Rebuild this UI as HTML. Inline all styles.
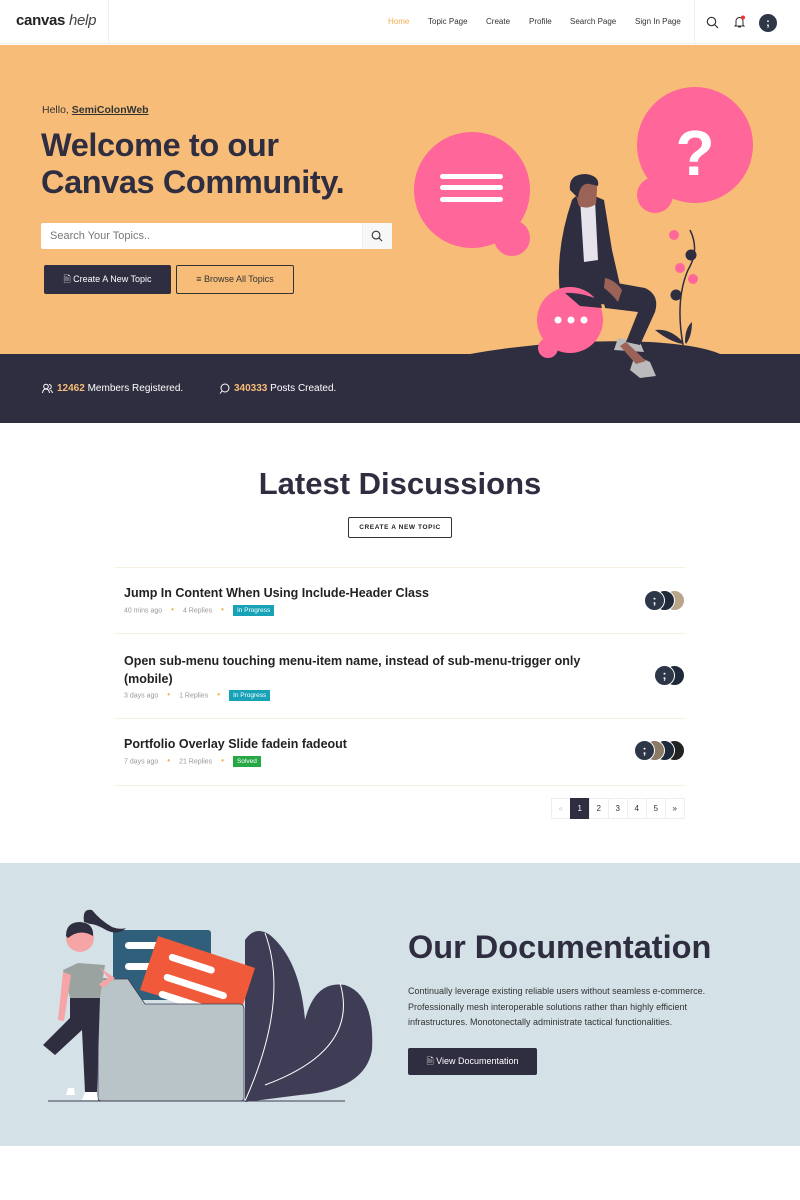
<!DOCTYPE html>
<html><head><meta charset="utf-8"><style>
*{margin:0;padding:0;box-sizing:border-box}
body{width:800px;height:1200px;background:#fff;font-family:"Liberation Sans",sans-serif;color:#2f2d40;position:relative;overflow:hidden}
.a{position:absolute}
.nav a{position:absolute;top:17px;font-size:8px;color:#333;text-decoration:none}
.t{font-weight:bold;font-size:12.5px;color:#222;left:124px}
.m{font-size:7px;color:#999;left:124px}
.m b{color:#f0ad4e;margin:0 9px;font-size:8px}
.tag{display:inline-block;color:#fff;font-size:6.5px;padding:2px 4px;vertical-align:middle}
.av{position:absolute;width:21px;height:21px;border-radius:50%;border:1.5px solid #fff}
.pg{position:absolute;top:798px;height:21px;width:19.5px;border:1px solid #eee;font-size:8px;text-align:center;line-height:19px;color:#333;background:#fff}
.sep{position:absolute;left:115px;width:570px;height:1px;background:#f5efe4}
</style></head><body>
<!-- header -->
<div class="a" style="left:0;top:0;width:800px;height:44px;border-bottom:1px solid #eee;background:#fff"></div>
<div class="a" style="left:16px;top:12px;font-size:15px;color:#222;letter-spacing:-0.3px"><span style="font-weight:bold">canvas</span><span style="font-style:italic;color:#444"> help</span></div>
<div class="a" style="left:108px;top:0;width:1px;height:44px;background:#eee"></div>
<div class="a" style="left:694px;top:0;width:1px;height:44px;background:#eee"></div>
<div class="nav">
<a style="left:388px;color:#f0ad4e">Home</a>
<a style="left:428px">Topic Page</a>
<a style="left:486px">Create</a>
<a style="left:529px">Profile</a>
<a style="left:570px">Search Page</a>
<a style="left:635px">Sign In Page</a>
</div>
<svg class="a" style="left:706px;top:16px" width="13" height="13" viewBox="0 0 13 13"><circle cx="5.5" cy="5.5" r="4.2" fill="none" stroke="#333" stroke-width="1.2"/><line x1="8.5" y1="8.5" x2="12" y2="12" stroke="#333" stroke-width="1.2"/></svg>
<svg class="a" style="left:733px;top:15px" width="13" height="14" viewBox="0 0 13 14"><path d="M3 10V6a3.5 3.5 0 017 0v4l1 1H2z" fill="none" stroke="#333" stroke-width="1"/><path d="M5 12h3" stroke="#333"/><circle cx="10" cy="2.5" r="2" fill="#e33"/></svg>
<div class="a" style="left:759px;top:14px;width:18px;height:18px;border-radius:50%;background:#2d3748;color:#fff;font-size:11px;font-weight:bold;text-align:center;line-height:18px">;</div>

<!-- hero -->
<div class="a" style="left:0;top:45px;width:800px;height:310px;background:#f7bd78"></div>
<div class="a" style="left:0;top:354px;width:800px;height:69px;background:#2f2d40"></div>
<div class="a" style="left:42px;top:104px;font-size:10.5px;color:#333">Hello, <b style="text-decoration:underline">SemiColonWeb</b></div>
<div class="a" style="left:41px;top:127px;font-size:32.5px;font-weight:bold;line-height:37px;color:#2f2d40;letter-spacing:-0.4px">Welcome to our<br>Canvas Community.</div>
<div class="a" style="left:41px;top:223px;width:351px;height:26px;background:#fff;border-radius:2px"></div>
<div class="a" style="left:362px;top:223px;width:30px;height:26px;background:#f7f7f7;border-left:1px solid #eee"></div>
<div class="a" style="left:50px;top:230px;font-size:11px;color:#777">Search Your Topics..</div>
<svg class="a" style="left:371px;top:230px" width="12" height="12" viewBox="0 0 13 13"><circle cx="5.5" cy="5.5" r="4.2" fill="none" stroke="#333" stroke-width="1.2"/><line x1="8.5" y1="8.5" x2="12" y2="12" stroke="#333" stroke-width="1.2"/></svg>
<div class="a" style="left:44px;top:265px;width:127px;height:29px;background:#2f2d40;border-radius:2px;color:#fff;font-size:9px;text-align:center;line-height:29px">🗎 Create A New Topic</div>
<div class="a" style="left:176px;top:265px;width:118px;height:29px;border:1px solid #333;border-radius:2px;color:#333;font-size:9px;text-align:center;line-height:27px">≡ Browse All Topics</div>

<svg class="a" style="left:400px;top:80px" width="400" height="310" viewBox="0 0 400 310">
<circle cx="72" cy="110" r="58" fill="#ff6699"/><circle cx="112" cy="158" r="18" fill="#ff6699"/>
<rect x="40" y="94" width="63" height="5" rx="2.5" fill="#fff"/><rect x="40" y="105" width="63" height="5" rx="2.5" fill="#fff"/><rect x="40" y="117" width="63" height="5" rx="2.5" fill="#fff"/>
<circle cx="295" cy="65" r="58" fill="#ff6699"/><circle cx="255" cy="115" r="18" fill="#ff6699"/>
<text x="295" y="95" font-size="64" font-weight="bold" fill="#fff" text-anchor="middle" font-family="Liberation Sans">?</text>
<path d="M70 274Q160 258 250 262Q300 265 320 274Z" fill="#2f2d40"/>
<!-- plant -->
<path d="M283 265Q275 220 288 190Q300 170 290 150" fill="none" stroke="#2f2d40" stroke-width="1.5"/>
<path d="M283 262Q270 248 255 250Q270 262 283 264Z" fill="#2f2d40"/><path d="M285 262Q285 248 292 242Q292 256 286 264Z" fill="#2f2d40"/>
<circle cx="274" cy="155" r="5" fill="#ff6699"/><circle cx="291" cy="175" r="5.5" fill="#2f2d40"/><circle cx="280" cy="188" r="5" fill="#ff6699"/><circle cx="293" cy="199" r="5" fill="#ff6699"/><circle cx="276" cy="215" r="5.5" fill="#2f2d40"/>
<!-- person -->
<path d="M218 258L240 262L244 272L214 270Z" fill="#bbb"/>
<path d="M235 275L250 282L256 296L240 298L230 290Z" fill="#bbb"/>
<path d="M226 262L246 281L236 284L220 266Z" fill="#9b6358"/>
<path d="M200 200L245 208Q260 215 255 232L240 265L226 262L238 232L205 228Z" fill="#2f2d40"/>
<path d="M172 120Q178 112 190 114L204 120L212 170L220 205L208 225L170 220L160 215Q155 170 172 120Z" fill="#2f2d40"/>
<path d="M180 118L195 120L198 180L184 182Z" fill="#e6e3ec"/>
<path d="M175 112Q174 100 186 99Q198 100 197 110L196 124Q188 130 179 126Z" fill="#9b6358"/>
<path d="M170 110Q168 94 186 94Q200 96 198 106L190 104Q180 102 178 118Z" fill="#2f2d40"/>
<path d="M205 198Q215 200 222 210L218 222Q210 212 204 208Z" fill="#9b6358"/>
<circle cx="170" cy="240" r="33" fill="#ff6699"/><circle cx="148" cy="268" r="10" fill="#ff6699"/>
<circle cx="158" cy="240" r="3.5" fill="#fff"/><circle cx="171" cy="240" r="3.5" fill="#fff"/><circle cx="184" cy="240" r="3.5" fill="#fff"/>
<path d="M165 213Q180 212 200 220L202 228L180 226Z" fill="#2f2d40"/>
</svg>

<!-- stats -->
<svg class="a" style="left:42px;top:383px" width="11" height="11" viewBox="0 0 11 11"><circle cx="4" cy="3.5" r="2.3" fill="none" stroke="#fff"/><path d="M0.5 10Q1 6 4 6Q7 6 7.5 10" fill="none" stroke="#fff"/><path d="M7 1.5A2 2 0 017 6M8.5 7Q10 8 10.5 10" fill="none" stroke="#fff"/></svg>
<div class="a" style="left:57px;top:383px;font-size:10px;color:#fff"><b style="color:#f7bd78">12462</b> Members Registered.</div>
<svg class="a" style="left:219px;top:383px" width="11" height="11" viewBox="0 0 11 11"><circle cx="6" cy="5" r="4" fill="none" stroke="#fff"/><path d="M3 8L1 10.5" stroke="#fff"/></svg>
<div class="a" style="left:234px;top:383px;font-size:10px;color:#fff"><b style="color:#f7bd78">340333</b> Posts Created.</div>

<!-- latest -->
<div class="a" style="left:0;top:466px;width:800px;text-align:center;font-size:31px;font-weight:bold;color:#2f2d40">Latest Discussions</div>
<div class="a" style="left:348px;top:517px;width:104px;height:21px;border:1px solid #333;border-radius:2px;font-size:6.5px;font-weight:bold;letter-spacing:0.6px;text-align:center;line-height:19px;color:#222">CREATE A NEW TOPIC</div>

<div class="sep" style="top:567px"></div>
<div class="a t" style="top:586px">Jump In Content When Using Include-Header Class</div>
<div class="a m" style="top:605px">40 mins ago<b>•</b>4 Replies<b>•</b><span class="tag" style="background:#17a2b8">In Progress</span></div>
<div class="av" style="left:664px;top:590px;background:#b9a58a"></div><div class="av" style="left:654px;top:590px;background:#1e2a3a"></div><div class="av" style="left:644px;top:590px;background:#2d3748"></div>
<div class="a" style="left:644px;top:590px;width:21px;height:21px;color:#fff;font-weight:bold;font-size:12px;text-align:center;line-height:21px">;</div>
<div class="sep" style="top:633px"></div>
<div class="a t" style="top:652px;line-height:18px;width:460px">Open sub-menu touching menu-item name, instead of sub-menu-trigger only (mobile)</div>
<div class="a m" style="top:690px">3 days ago<b>•</b>1 Replies<b>•</b><span class="tag" style="background:#17a2b8">In Progress</span></div>
<div class="av" style="left:664px;top:665px;background:#1e2a3a"></div><div class="av" style="left:654px;top:665px;background:#2d3748"></div>
<div class="a" style="left:654px;top:665px;width:21px;height:21px;color:#fff;font-weight:bold;font-size:12px;text-align:center;line-height:21px">;</div>
<div class="sep" style="top:718px"></div>
<div class="a t" style="top:737px">Portfolio Overlay Slide fadein fadeout</div>
<div class="a m" style="top:756px">7 days ago<b>•</b>21 Replies<b>•</b><span class="tag" style="background:#28a745">Solved</span></div>
<div class="av" style="left:664px;top:740px;background:#222"></div><div class="av" style="left:654px;top:740px;background:#1e2a3a"></div><div class="av" style="left:644px;top:740px;background:#8a7a66"></div><div class="av" style="left:634px;top:740px;background:#2d3748"></div>
<div class="a" style="left:634px;top:740px;width:21px;height:21px;color:#fff;font-weight:bold;font-size:12px;text-align:center;line-height:21px">;</div>
<div class="sep" style="top:785px"></div>
<div class="pg" style="left:551px;color:#ccc">«</div>
<div class="pg" style="left:570px;background:#2f2d40;color:#fff;border-color:#2f2d40">1</div>
<div class="pg" style="left:589px">2</div><div class="pg" style="left:608px">3</div><div class="pg" style="left:627px">4</div><div class="pg" style="left:646px">5</div><div class="pg" style="left:665px">»</div>

<!-- docs -->
<div class="a" style="left:0;top:863px;width:800px;height:283px;background:#d4e1e7"></div>
<svg class="a" style="left:0;top:880px" width="400" height="240" viewBox="0 0 400 240">
<path d="M245 60Q255 45 270 55Q300 80 305 140Q315 100 345 105Q375 115 372 170Q365 210 300 215L245 222Z" fill="#3f3d56"/>
<path d="M265 53Q290 120 245 221M340 103Q360 170 265 205" fill="none" stroke="#fff" stroke-width="1"/>
<rect x="113" y="50" width="98" height="70" rx="3" fill="#2f5f7a"/>
<rect x="125" y="62" width="40" height="7" rx="3.5" fill="#fff"/><rect x="125" y="83" width="40" height="7" rx="3.5" fill="#fff"/>
<path d="M158 56L255 88L238 140L140 110Z" fill="#f05a3a"/>
<rect x="170" y="73" width="48" height="7" rx="3.5" fill="#fff" transform="rotate(18 170 73)"/>
<rect x="165" y="93" width="66" height="7" rx="3.5" fill="#fff" transform="rotate(18 165 93)"/>
<rect x="160" y="110" width="66" height="7" rx="3.5" fill="#fff" transform="rotate(18 160 110)"/>
<path d="M98 105Q98 99 104 99L128 99L145 124L240 124Q244 124 244 130L244 218Q244 221 240 221L102 221Q98 221 98 218Z" fill="#b8c4c8" stroke="#3f3d56" stroke-width="0.8"/>
<line x1="48" y1="221" x2="345" y2="221" stroke="#3f3d56" stroke-width="1"/>
<path d="M78 83L105 85L100 118L70 118L63 90Z" fill="#9aa39f"/>
<path d="M70 118L100 118L97 212L85 212L82 150L55 175L43 165L70 138Z" fill="#2f2d40"/>
<path d="M85 212L97 212L98 220L82 220Z M68 208L74 208L75 215L66 215Z" fill="#fff"/>
<path d="M63 92L58 140L64 141L71 95Z M100 88L115 98L103 108L99 104L108 98Z" fill="#f5a5a5"/>
<circle cx="80" cy="58" r="14" fill="#f5a5a5"/>
<path d="M66 56Q66 42 80 42Q94 43 93 56Q80 48 68 58Z" fill="#2f2d40"/>
<path d="M84 42Q82 28 92 30Q100 40 112 47Q120 50 126 48Q118 56 106 50Q96 44 90 44Z" fill="#2f2d40"/>
</svg>
<div class="a" style="left:408px;top:929px;font-size:32.5px;font-weight:bold;color:#2f2d40">Our Documentation</div>
<div class="a" style="left:408px;top:984px;font-size:9px;line-height:15.7px;color:#333;width:340px">Continually leverage existing reliable users without seamless e-commerce. Professionally mesh interoperable solutions rather than highly efficient infrastructures. Monotonectally administrate tactical functionalities.</div>
<div class="a" style="left:408px;top:1048px;width:129px;height:27px;background:#2f2d40;border-radius:2px;color:#fff;font-size:9px;text-align:center;line-height:27px">🗎 View Documentation</div>
</body></html>
